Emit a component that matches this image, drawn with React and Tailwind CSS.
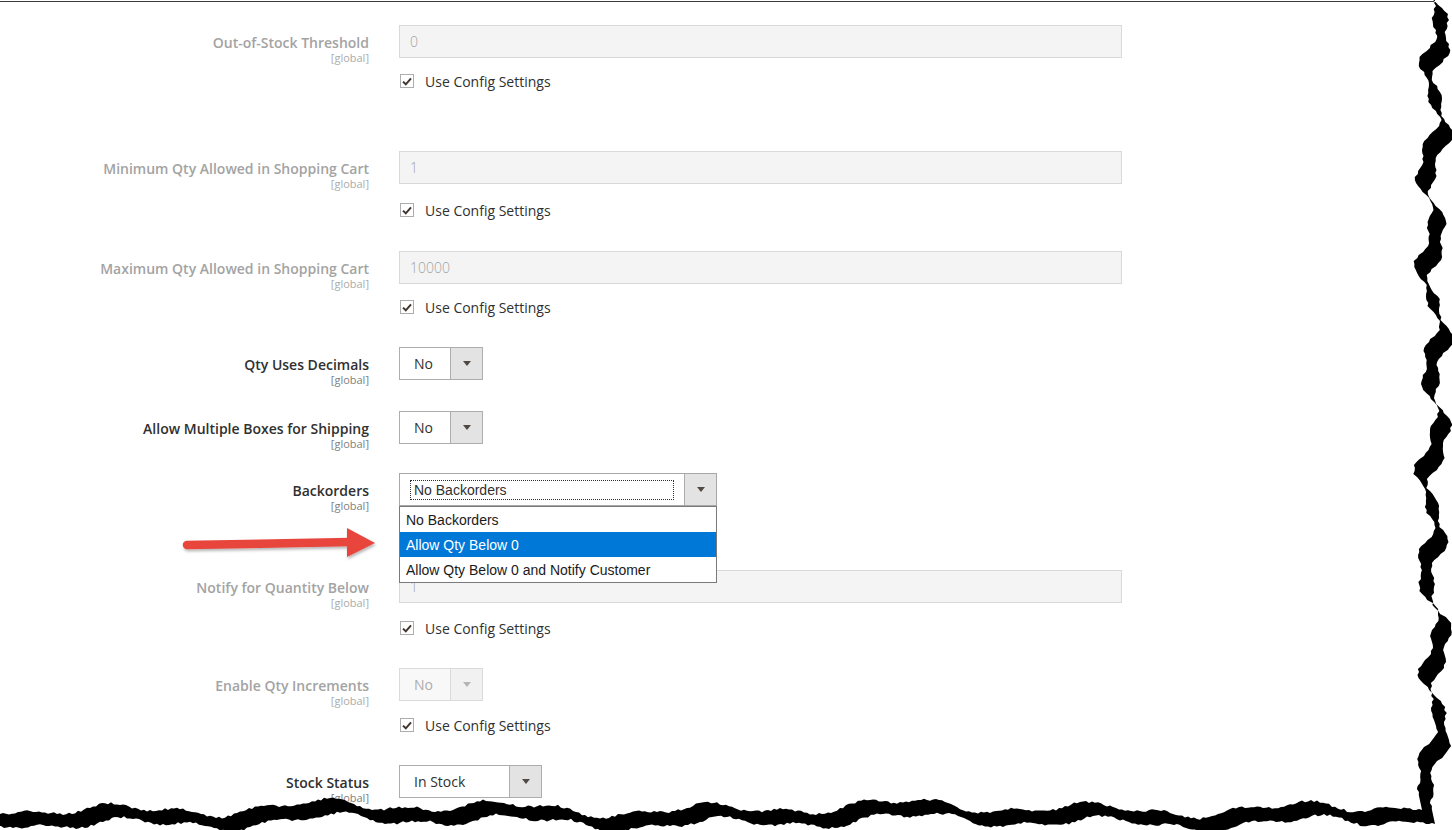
import React from "react";

// deterministic noise for the torn paper edge
const makeRand = (seed) => () => {
  seed = (seed * 16807) % 2147483647;
  return seed / 2147483647;
};
const rand = makeRand(12345);

const paper = [[-60, -60]];
for (let y = -60; y <= 796; y += 3) {
  const x =
    1427 +
    8 * Math.sin(y / 16 + 0.4) +
    4 * Math.sin(y / 6.5 + 1.7) +
    3 * Math.sin(y / 47) +
    (rand() - 0.5) * 2.5;
  paper.push([x, y]);
}
for (let x = 1422; x >= -60; x -= 3) {
  const y =
    808 +
    5 * Math.sin(x / 31 + 0.8) +
    3 * Math.sin(x / 12 + 2.1) +
    3 * Math.sin(x / 83) +
    (rand() - 0.5) * 2.5;
  paper.push([x, y]);
}
const toPath = (pts, dx = 0, dy = 0) =>
  "M" + pts.map(([x, y]) => `${(x + dx).toFixed(1)} ${(y + dy).toFixed(1)}`).join("L") + "Z";
const paperPath = toPath(paper);
const shadowPath = toPath(paper, 13, 14) + paperPath;
const outsidePath = "M0 0H1452V830H0Z" + paperPath;

const Caret = ({ color = "#514943" }) => (
  <svg width="8" height="5" viewBox="0 0 8 5">
    <polygon points="0,0 8,0 4,5" fill={color} />
  </svg>
);

const Field = ({ label, disabled, className, children }) => (
  <div className={`flex h-[33px] ${className}`}>
    <div className="w-[369px] shrink-0 pt-[9px] text-right">
      <div
        className={`text-[14px] leading-[18px] font-semibold ${
          disabled ? "text-[#a3a3a3]" : "text-[#303030]"
        }`}
      >
        {label}
      </div>
      <div
        className={`text-[11px] leading-[12px] ${
          disabled ? "text-[#ababab]" : "text-[#808080]"
        }`}
      >
        [global]
      </div>
    </div>
    <div className="relative ml-[30px]">{children}</div>
  </div>
);

const TextInput = ({ value }) => (
  <div className="flex h-[33px] w-[723px] items-center border border-[#d9d9d9] bg-[#f4f4f4] px-[10px] text-[14px] font-light text-[#a3a3a3]">
    {value}
  </div>
);

const Select = ({ value, width, disabled }) => (
  <div
    className={`flex h-[33px] border ${width} ${
      disabled ? "border-[#dadada] bg-[#f8f8f8]" : "border-[#adadad] bg-white"
    }`}
  >
    <div
      className={`flex flex-1 items-center pl-[14px] text-[14px] ${
        disabled ? "text-[#adadad]" : "text-[#303030]"
      }`}
    >
      {value}
    </div>
    <div
      className={`flex w-[32px] items-center justify-center border-l ${
        disabled ? "border-[#dadada] bg-[#f1f1f1]" : "border-[#adadad] bg-[#e3e3e3]"
      }`}
    >
      <Caret color={disabled ? "#b5b5b5" : "#514943"} />
    </div>
  </div>
);

const UseConfig = ({ className }) => (
  <div className={`ml-[400px] flex h-[18px] items-center gap-[11px] ${className}`}>
    <div className="flex h-[14px] w-[14px] items-center justify-center border border-[#adadad] bg-white">
      <svg width="10" height="9" viewBox="0 0 10 9">
        <path d="M1 4.6L3.8 7.3L9 1.4" fill="none" stroke="#41362f" strokeWidth="2" />
      </svg>
    </div>
    <span className="text-[14px] text-[#303030]">Use Config Settings</span>
  </div>
);

const backorderOptions = [
  "No Backorders",
  "Allow Qty Below 0",
  "Allow Qty Below 0 and Notify Customer",
];

export default function App() {
  return (
    <div className="relative h-[830px] w-[1452px] overflow-hidden bg-white font-['Open_Sans',sans-serif]">
      <div className="mt-[1px] h-[1px] w-[1434px] bg-[#3a3a3a]" />

      <Field label="Out-of-Stock Threshold" disabled className="mt-[23px]">
        <TextInput value="0" />
      </Field>
      <UseConfig className="mt-[14px]" />

      <Field label="Minimum Qty Allowed in Shopping Cart" disabled className="mt-[61px]">
        <TextInput value="1" />
      </Field>
      <UseConfig className="mt-[17px]" />

      <Field label="Maximum Qty Allowed in Shopping Cart" disabled className="mt-[32px]">
        <TextInput value="10000" />
      </Field>
      <UseConfig className="mt-[14px]" />

      <Field label="Qty Uses Decimals" className="mt-[31px]">
        <Select value="No" width="w-[84px]" />
      </Field>

      <Field label="Allow Multiple Boxes for Shipping" className="mt-[31px]">
        <Select value="No" width="w-[84px]" />
      </Field>

      <Field label="Backorders" className="relative z-10 mt-[29px]">
        <div className="flex h-[33px] w-[318px] border border-[#a8a8a8] bg-white font-['Liberation_Sans',Arial,sans-serif]">
          <div className="flex flex-1 items-center pl-[10px] pr-[10px]">
            <div className="h-[20px] w-full border border-dotted border-[#303030] pl-[3px] text-[14px] leading-[19px] text-[#303030]">
              No Backorders
            </div>
          </div>
          <div className="flex w-[32px] items-center justify-center border-l border-[#adadad] bg-[#e3e3e3]">
            <Caret />
          </div>
        </div>
        <div className="absolute left-0 top-full w-[318px] border border-[#7a7a7a] bg-white font-['Liberation_Sans',Arial,sans-serif] text-[14px]">
          {backorderOptions.map((opt, i) => (
            <div
              key={opt}
              className={`h-[25px] pl-[6px] pt-[2px] leading-[23px] ${
                i === 1 ? "bg-[#0078d7] text-white" : "text-[#1a1a1a]"
              }`}
            >
              {opt}
            </div>
          ))}
        </div>
      </Field>

      <Field label="Notify for Quantity Below" disabled className="mt-[64px]">
        <TextInput value="1" />
      </Field>
      <UseConfig className="mt-[16px]" />

      <Field label="Enable Qty Increments" disabled className="mt-[31px]">
        <Select value="No" width="w-[84px]" disabled />
      </Field>
      <UseConfig className="mt-[15px]" />

      <Field label="Stock Status" className="mt-[31px]">
        <Select value="In Stock" width="w-[143px]" />
      </Field>

      {/* red pointer arrow + torn paper edge */}
      <svg
        className="pointer-events-none absolute inset-0 z-20"
        width="1452"
        height="830"
        viewBox="0 0 1452 830"
      >
        <defs>
          <filter id="arrowShadow" x="-10%" y="-50%" width="120%" height="200%">
            <feDropShadow dx="1" dy="2" stdDeviation="1.5" floodColor="#000" floodOpacity="0.3" />
          </filter>
        </defs>
        <g filter="url(#arrowShadow)" fill="#e8453c">
          <line x1="187" y1="545" x2="350" y2="542" stroke="#e8453c" strokeWidth="8.5" strokeLinecap="round" />
          <polygon points="347,528 375,543 347,557" />
        </g>
        <path d={outsidePath} fill="#fff" fillRule="evenodd" />
        <path d={shadowPath} fill="#000" fillRule="evenodd" />
      </svg>
    </div>
  );
}
